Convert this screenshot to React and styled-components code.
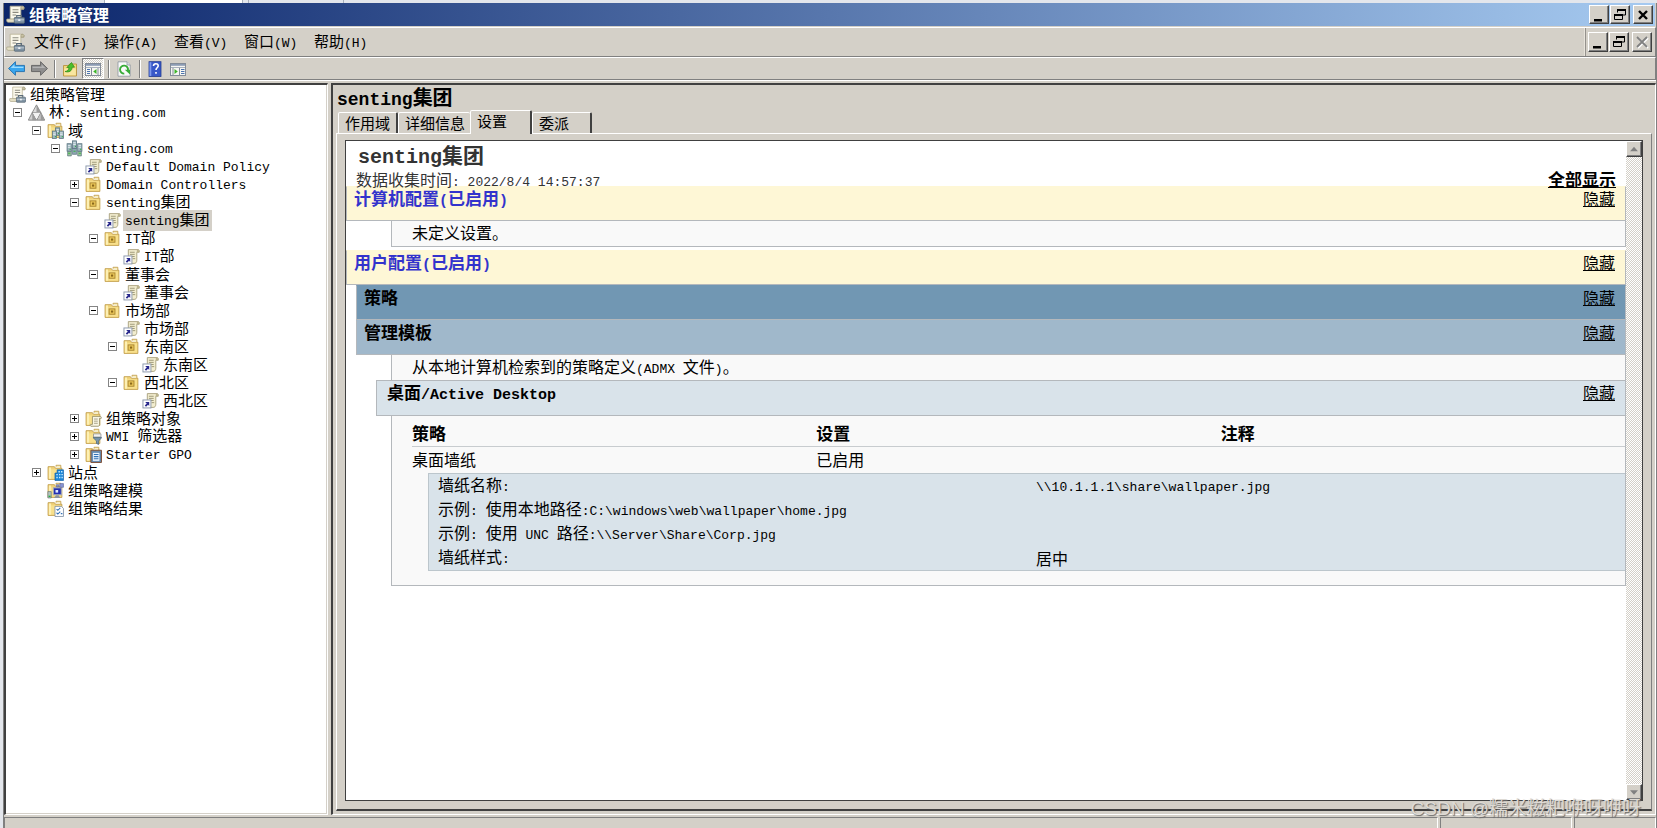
import React from "react";
import styled, { createGlobalStyle, css } from "styled-components";

const face = "#d4d0c8";
const shade = "#808080";
const dark = "#404040";
const line = "#b4b8bc";

const GlobalStyle = createGlobalStyle`
  * { box-sizing: border-box; }
  html, body, #root { height: 100%; }
  body {
    margin: 0;
    overflow: hidden;
    background: #e3e6ec;
    color: #000;
    font-family: "Noto Sans CJK SC", sans-serif;
    font-size: 15px;
    line-height: 18px;
  }
  button { font: inherit; color: inherit; padding: 0; margin: 0; }
`;

/* ---------- text ---------- */

const Latin = styled.span`
  font-family: "Liberation Mono", monospace;
  font-size: ${(p) => p.$size}px;
  white-space: pre;
`;

/* Latin runs are set in a half-width face beside the full-width Chinese. */
function Text({ children, latin = 13 }) {
  return children
    .split(/([\x20-\x7e]+)/)
    .filter(Boolean)
    .map((run, i) =>
      /^[\x20-\x7e]/.test(run) ? (
        <Latin key={i} $size={latin}>{run}</Latin>
      ) : (
        <React.Fragment key={i}>{run}</React.Fragment>
      )
    );
}

/* ---------- icons ---------- */

const Svg = styled.svg`
  display: block;
  flex: none;
  width: ${(p) => p.$size || 17}px;
  height: ${(p) => p.$size || 17}px;
`;

const Scroll = () => (
  <>
    <path d="M3.500 1h10c1.500 0 2 1 1.500 2.500h-2.500v8.500H3.500z" fill="#fbf8ea" stroke="#b8b296" strokeWidth=".7" />
    <path d="M12.500 3.500V2c0-1 2-1.500 2.700 0L15 3.500z" fill="#c9c3a6" stroke="#948d70" strokeWidth=".5" />
    <path d="M5.500 4h5M5.500 6.200h5M5.500 8.400h3" stroke="#8c8a80" strokeWidth="1" />
    <path d="M.8 11.800h9v2.800H1.800C.6 14.600.2 12.800.8 11.800z" fill="#e4dfc4" stroke="#a8a284" strokeWidth=".6" />
  </>
);

const Folder = () => (
  <>
    <path d="M1 2.500h6l1 1.500h6v10.500H1z" fill="#f0d27a" stroke="#c09c48" strokeWidth=".8" />
    <path d="M8.500 2.500V1.200h4.500V4" fill="#f8eec0" stroke="#c09c48" strokeWidth=".8" />
    <path d="M1.800 5h11.500v8.800H1.800z" fill="#f8e08c" />
    <path d="M1.800 3.300h2v10.500h-2z" fill="#fdf0b4" />
  </>
);

const Server = ({ x, y }) => (
  <>
    <rect x={x} y={y} width="4" height="7" fill="#9fb4bd" stroke="#54707c" strokeWidth=".7" />
    <path d={`M${x + 0.8} ${y + 1.8}h2.400M${x + 0.8} ${y + 3.4}h2.400`} stroke="#eaf4f6" strokeWidth=".8" />
    <path d={`M${x + 2.4} ${y + 5.3}h1`} stroke="#2fae4a" strokeWidth="1.200" />
  </>
);

const glyphs = {
  console: (
    <>
      <Scroll />
      <path d="M9 10.500V9h4v1.500" fill="none" stroke="#5c6c7a" strokeWidth="1" />
      <rect x="7" y="10.500" width="8.500" height="4.800" rx=".6" fill="#8094a4" stroke="#566674" strokeWidth=".7" />
      <path d="M7.300 12.500h8" stroke="#c4ced6" strokeWidth=".8" />
      <path d="M10.300 12h1.800v1.500h-1.800z" fill="#eef2f5" />
    </>
  ),
  forest: (
    <g stroke="#6f6f6f" strokeWidth=".7" strokeLinejoin="round">
      <path d="M8 .8l4 7.200H4z" fill="#dcdcdc" />
      <path d="M4 8l3.900 7.200H.3z" fill="#d0d0d0" />
      <path d="M12 8l3.700 7.200H8.100z" fill="#c4c4c4" />
      <path d="M8 .8V8h4zM4 8v7.200h3.900zM12 8v7.200h3.700z" fill="#9a9a9a" stroke="none" />
      <path d="M4.600 8.300h6.800L8 14.500z" fill="#f2f2f2" stroke="none" />
    </g>
  ),
  domains: (
    <>
      <Folder />
      <Server x={8} y={5.5} />
      <Server x={5} y={8.5} />
      <Server x={11.5} y={8.5} />
    </>
  ),
  domain: (
    <>
      <path d="M1.500 10.500h3.500v4.500H1.500zM11 10.500h3.500v4.500h-3.500z" fill="#9cc09a" stroke="#54707c" strokeWidth=".6" />
      <Server x={1} y={3.5} />
      <Server x={11} y={3.5} />
      <path d="M6 7.500h4v6H6z" fill="#8da5b0" stroke="#54707c" strokeWidth=".6" />
      <Server x={6} y={0.8} />
      <path d="M2 12.500h2M12 12.500h2M7 10.500h2" stroke="#39b54a" strokeWidth="1" />
    </>
  ),
  link: (
    <>
      <path d="M5 1.500h9.500c1 .5 1 1.500.8 2.500h-2.300v7.500c0 2-1 3-2.500 3H5z" fill="#f2edcf" stroke="#a39b76" strokeWidth=".8" />
      <path d="M13 4V2.500c0-1 1.500-1 2.200 0V4z" fill="#bdb48c" />
      <path d="M6.500 4h4.500M6.500 6h4.500M8.500 8h2.500M9 10h2.500" stroke="#9c9778" strokeWidth=".9" />
      <rect x=".9" y="7.500" width="7.500" height="7.500" fill="#fff" stroke="#8c98ac" strokeWidth=".9" />
      <path d="M3 9.300h3.800v3.800L5.700 12l-1.900 1.900-1.200-1.200 1.900-1.900z" fill="#28288c" />
    </>
  ),
  ou: (
    <>
      <Folder />
      <rect x="4.800" y="6.500" width="5.500" height="5" fill="#f0cc5c" stroke="#a88430" strokeWidth=".9" />
      <path d="M6.500 8h2.200v2H6.500z" fill="#8a681c" />
    </>
  ),
  objects: (
    <>
      <Folder />
      <path d="M7 6h7.500c1 .3.900 1.200.8 1.800h-1.600v6c0 .8-.6 1.500-1.500 1.500H5.500c-.8-.6-.6-1.500-.3-1.800H7z" fill="#f8f5e4" stroke="#948c68" strokeWidth=".8" />
      <path d="M8.500 8.500H12M8.500 10.500H12M8.500 12.500H12" stroke="#9c967c" strokeWidth=".8" />
    </>
  ),
  wmi: (
    <>
      <Folder />
      <path d="M8 5.500h7v3H8z" fill="#f2f2f2" stroke="#8c8c8c" strokeWidth=".7" />
      <path d="M7.500 9h8.300l-3 3.200V15.500l-2-1v-2.300z" fill="#7895ad" stroke="#4a657c" strokeWidth=".7" />
    </>
  ),
  starter: (
    <>
      <Folder />
      <path d="M5.500 4h10v11.500h-10z" fill="#6e8ca8" stroke="#7d4e36" strokeWidth=".9" />
      <path d="M7 6h7v8.500H7z" fill="#e9f2fb" stroke="#3d6ea5" strokeWidth=".6" />
      <path d="M8.300 8h4.400M8.300 10h4.400M8.300 12h4.400" stroke="#3272b8" strokeWidth="1" />
    </>
  ),
  sites: (
    <>
      <Folder />
      <path d="M9.500 5.500h6v10h-8V8.500h2z" fill="#1c86d8" stroke="#0c5ca4" strokeWidth=".6" />
      <path d="M10.800 7.200h1.300M13.200 7.200h1.300M8.800 10h1.300M11.300 10h1.300M13.600 10h1.300M8.800 12.600h1.300M11.300 12.600h1.300M13.600 12.600h1.300" stroke="#c8ecff" strokeWidth="1.400" />
    </>
  ),
  modeling: (
    <>
      <Folder />
      <rect x="6" y="5.500" width="7.500" height="6.500" fill="#2430b4" stroke="#a0a8bc" />
      <path d="M8 7.500h2.500V10H8z" fill="#dfe8ff" />
      <path d="M8.500 12.500h2.500l1.500 2.500H6.500z" fill="#8c94a0" />
      <path d="M9 2.500h2v2H9zM12 1.500h3.500V5H12z" fill="#8a96d4" stroke="#50588c" strokeWidth=".5" />
      <path d="M.8 9h3.200v6H.8z" fill="#b4c4c0" stroke="#60706c" strokeWidth=".6" />
      <path d="M1.500 13.500h1.800" stroke="#20b040" strokeWidth="1.300" />
    </>
  ),
  results: (
    <>
      <Folder />
      <path d="M7.500 6h6l2 2v7.500h-8z" fill="#fff" stroke="#8494a8" strokeWidth=".8" />
      <path d="M9 8.500l1.200 1.200L12.500 7.500M9 12l1.200 1.200 2.300-2.200M13 12.800h1.500" fill="none" stroke="#3272b8" strokeWidth="1" />
    </>
  ),
  back: (
    <>
      <path d="M.5 8L7 1.600v3.500h8.500v5.800H7v3.500z" fill="#3aa6ee" stroke="#1c6cac" strokeWidth=".8" strokeLinejoin="round" />
      <path d="M2.500 7.500L6 4.200v2.200h8.500v1.100z" fill="#9cdcff" />
    </>
  ),
  forward: (
    <>
      <path d="M15.500 8L9 1.600v3.500H.5v5.800H9v3.500z" fill="#8e8e8e" stroke="#5c5c5c" strokeWidth=".8" strokeLinejoin="round" />
      <path d="M13.500 7.500L10 4.200v2.200H1.500v1.100z" fill="#b4b4b4" />
    </>
  ),
  up: (
    <>
      <path d="M1.500 4.500h5l1-1.500h7v12h-13z" fill="#f3d67c" stroke="#b48c34" strokeWidth=".8" />
      <path d="M2.300 7.500h11.500v6.700H2.300z" fill="#f9e6a0" />
      <path d="M3 10.500c2.500-.3 3.700-1.500 4-4H4.800L9.500 1.500l3 4.700h-2.300c-.2 4-3.200 5.500-7.200 4.300z" fill="#4cbf2c" stroke="#2a8a18" strokeWidth=".7" />
    </>
  ),
  tree: (
    <>
      <rect x=".5" y="2.500" width="15" height="12" fill="#f6f6f2" stroke="#848c98" />
      <path d="M1 3h14v1.800H1z" fill="#8c9cb4" />
      <path d="M1 6.500h14" stroke="#a8b0bc" />
      <path d="M6.500 7v7M13 7v7" stroke="#848c98" />
      <path d="M2 8.500h3M2 10.500h3M2 12.500h3" stroke="#4c74b0" />
      <path d="M11.500 8v5L8.200 10.500z" fill="#3cb428" />
    </>
  ),
  actions: (
    <>
      <rect x=".5" y="2.500" width="15" height="12" fill="#f6f6f2" stroke="#848c98" />
      <path d="M1 3h14v1.800H1z" fill="#8c9cb4" />
      <path d="M1 6.500h14" stroke="#a8b0bc" />
      <path d="M3 7v7M9.500 7v7" stroke="#848c98" />
      <path d="M11 8.500h3.500M11 10.500h3.500M11 12.500h3.500" stroke="#4c74b0" />
      <path d="M4.500 8v5l3.300-2.500z" fill="#3cb428" />
    </>
  ),
  refresh: (
    <>
      <path d="M2 .8h9l3.200 3.200v11.200H2z" fill="#fafafa" stroke="#8c949c" strokeWidth=".8" />
      <path d="M11 .8V4h3.200" fill="#dde4ea" stroke="#8c949c" strokeWidth=".8" />
      <path d="M8.300 12.600A4 4 0 1 1 12 9.300" fill="none" stroke="#38ac38" strokeWidth="1.900" />
      <path d="M8.800 8.800h5.200v4.700z" fill="#38ac38" />
    </>
  ),
  help: (
    <>
      <rect x="2" y=".7" width="12" height="14.800" fill="#3858c8" stroke="#243c90" strokeWidth=".8" />
      <path d="M2.500 1.200h1.800v13.800H2.500z" fill="#7c98ec" />
      <path d="M6.500 5c0-3 4.700-3 4.700-.2 0 2-2.200 2-2.200 4.200M9 11v1.800" fill="none" stroke="#fff" strokeWidth="1.600" />
    </>
  ),
  minimize: <path d="M3 12h8v2.500H3z" fill="#000" />,
  restore: (
    <>
      <path d="M5.500 5.500V2.500h8V8H11M2.500 7.500h8v5h-8z" fill="none" stroke="#000" />
      <path d="M5 3h9M2 8h9" stroke="#000" strokeWidth="2" />
    </>
  ),
  close: <path d="M4 4l8 8M12 4l-8 8" stroke="#000" strokeWidth="2.400" />,
  closeOff: (
    <>
      <path d="M4 4l10 10M14 4l-10 10" stroke="#fff" strokeWidth="1.800" />
      <path d="M3 3l10 10M13 3l-10 10" stroke="#808080" strokeWidth="1.800" />
    </>
  ),
  arrowUp: <path d="M3.500 10.500h9L8 5.500z" fill="#808080" />,
  arrowDown: <path d="M3.500 6h9L8 11z" fill="#808080" />,
};

const Icon = ({ name, size }) => (
  <Svg viewBox="0 0 16 16" $size={size} aria-hidden="true">
    {glyphs[name]}
  </Svg>
);

/* ---------- frame ---------- */

const Screen = styled.div`
  position: relative;
  height: 100vh;
  display: flex;
  flex-direction: column;
  overflow: hidden;
`;

const BackStrip = styled.div`
  flex: none;
  height: 3px;
  padding-left: 104px;
  display: flex;
  gap: 5px;
`;

const BackTab = styled.span`
  width: ${(p) => p.$width}px;
  background: ${(p) => (p.$active ? "#fff" : "transparent")};
  border: solid #a8b0bc;
  border-width: 0 1px;
`;

const Window = styled.main`
  flex: 1;
  min-height: 0;
  margin-left: 3px;
  display: flex;
  flex-direction: column;
  background: ${face};
  border: solid ${shade};
  border-width: 0 1px;
`;

const TitleBar = styled.header`
  flex: none;
  height: 23px;
  margin-right: 1px;
  padding: 0 2px 0 2px;
  display: flex;
  align-items: center;
  gap: 4px;
  background: linear-gradient(to right, #0a246a, #a6caf0);
`;

const WindowTitle = styled.h1`
  margin: 0;
  padding-bottom: 2px;
  flex: 1;
  color: #fff;
  font-size: 16px;
  line-height: 20px;
`;

const raised = css`
  background: ${face};
  border: 1px solid;
  border-color: #fff ${dark} ${dark} #fff;
  box-shadow: inset -1px -1px 0 ${shade};
`;

const ButtonGroup = styled.div`
  display: flex;
  gap: 1px;
`;

const FrameButton = styled.button`
  ${raised}
  width: 20px;
  height: ${(p) => p.$height || 19}px;
  margin-left: ${(p) => (p.$apart ? 2 : 0)}px;
  display: flex;
  align-items: center;
  justify-content: center;
`;

const MenuBar = styled.nav`
  flex: none;
  height: 30px;
  margin-top: 1px;
  display: flex;
  align-items: stretch;
  border: solid;
  border-width: 1px 1px 1px;
  border-color: #fff ${shade} ${shade} #fff;
`;

const MenuItems = styled.div`
  flex: 1;
  padding-left: 1px;
  display: flex;
  align-items: center;
`;

const MenuItem = styled.button`
  width: 70px;
  height: 22px;
  padding: 0 0 0 9px;
  text-align: left;
  background: none;
  border: 0;
  white-space: nowrap;
`;

const ChildControls = styled(ButtonGroup)`
  align-items: center;
  padding: 0 3px 0 2px;
  border-left: 2px ridge #e8e4dc;
`;

const ToolBar = styled.div`
  flex: none;
  height: 23px;
  padding-left: 1px;
  display: flex;
  align-items: center;
  gap: 1px;
  border: solid;
  border-width: 1px 1px 1px 0;
  border-color: #fff ${shade} ${shade};
`;

const ToolButton = styled.button`
  width: 22px;
  height: 21px;
  display: flex;
  align-items: center;
  justify-content: center;
  border: 1px solid transparent;
  background: none;
  ${(p) =>
    p.$pressed &&
    css`
      border-color: ${shade} #fff #fff ${shade};
      background: repeating-conic-gradient(#fff 0 25%, ${face} 0 50%) 0 0 / 2px 2px;
    `}
`;

const Divider = styled.span`
  width: 2px;
  height: 18px;
  margin: 0 2px 0 3px;
  border-left: 1px solid ${shade};
  border-right: 1px solid #fff;
`;

const Panes = styled.div`
  flex: 1;
  min-height: 0;
  display: flex;
  gap: 3px;
  padding-top: 2px;
  border-top: 1px solid #fff;
`;

const sunken = css`
  border: solid;
  border-width: 2px 1px 1px 2px;
  border-color: ${dark} #fff #fff ${dark};
`;

const TreePane = styled.aside`
  ${sunken}
  flex: 0 0 324px;
  background: #fff;
  box-shadow: inset -1px -1px 0 ${face};
  overflow: hidden;
`;

/* ---------- tree ---------- */

const TreeList = styled.ul`
  margin: 0;
  padding: 0;
  list-style: none;
`;

const TreeRow = styled.li`
  height: 18px;
  padding-left: ${(p) => 3 + 19 * Math.max(0, p.$level - 1)}px;
  display: flex;
  align-items: center;
  gap: 2px;
  white-space: nowrap;
`;

const Slot = styled.span`
  width: 17px;
  flex: none;
  display: flex;
  justify-content: center;
`;

const Expander = styled.button`
  position: relative;
  width: 9px;
  height: 9px;
  border: 1px solid #848484;
  background: #fff;
  &::before {
    content: "";
    position: absolute;
    inset: 3px 1px;
    background: #000;
  }
  &::after {
    content: "";
    position: absolute;
    inset: 1px 3px;
    background: ${(p) => (p.$open ? "transparent" : "#000")};
  }
`;

const Label = styled.span`
  padding: 0 2px;
  line-height: 18px;
  background: ${(p) => (p.$selected ? face : "transparent")};
`;

const tree = [
  [0, "console", "组策略管理"],
  [1, "forest", "林: senting.com", "-"],
  [2, "domains", "域", "-"],
  [3, "domain", "senting.com", "-"],
  [4, "link", "Default Domain Policy"],
  [4, "ou", "Domain Controllers", "+"],
  [4, "ou", "senting集团", "-"],
  [5, "link", "senting集团", "", true],
  [5, "ou", "IT部", "-"],
  [6, "link", "IT部"],
  [5, "ou", "董事会", "-"],
  [6, "link", "董事会"],
  [5, "ou", "市场部", "-"],
  [6, "link", "市场部"],
  [6, "ou", "东南区", "-"],
  [7, "link", "东南区"],
  [6, "ou", "西北区", "-"],
  [7, "link", "西北区"],
  [4, "objects", "组策略对象", "+"],
  [4, "wmi", "WMI 筛选器", "+"],
  [4, "starter", "Starter GPO", "+"],
  [2, "sites", "站点", "+"],
  [2, "modeling", "组策略建模"],
  [2, "results", "组策略结果"],
];

/* ---------- detail pane ---------- */

const DetailPane = styled.section`
  ${sunken}
  flex: 1;
  min-width: 0;
  display: flex;
  flex-direction: column;
  padding: 0 3px 3px 3px;
`;

const DetailTitle = styled.h2`
  margin: 0;
  padding-left: 1px;
  height: 25px;
  font-size: 20px;
  line-height: 24px;
`;

const Tabs = styled.div`
  display: flex;
  align-items: flex-end;
  height: 23px;
  padding-left: 2px;
`;

const Tab = styled.button`
  position: relative;
  min-width: 60px;
  height: 21px;
  padding: 0 5px 0 6px;
  text-align: left;
  white-space: nowrap;
  background: ${face};
  border: solid;
  border-width: 1px 2px 0 1px;
  border-color: #fff ${dark} transparent #fff;
  border-radius: 2px 2px 0 0;
  ${(p) =>
    p.$beforeSelected &&
    css`
      border-right-width: 0;
    `}
  ${(p) =>
    p.$selected &&
    css`
      min-width: 62px;
      height: 24px;
      margin-bottom: -1px;
      padding: 0 6px 4px;
      z-index: 1;
    `}
`;

const TabPage = styled.div`
  flex: 1;
  min-height: 0;
  padding: 6px 8px 8px;
  display: flex;
  border: solid;
  border-width: 1px 1px 2px 1px;
  border-color: #fff ${shade} ${dark} #fff;
`;

const ReportFrame = styled.div`
  flex: 1;
  min-width: 0;
  display: flex;
  border: 1px solid ${dark};
  background: #fff;
`;

const Report = styled.article`
  flex: 1;
  min-width: 0;
  overflow: hidden;
  font-size: 16px;
  line-height: 20px;
`;

const ScrollBar = styled.div`
  flex: 0 0 16px;
  display: flex;
  flex-direction: column;
  justify-content: space-between;
  background: repeating-conic-gradient(#fff 0 25%, ${face} 0 50%) 0 0 / 2px 2px;
`;

const ScrollButton = styled.button`
  ${raised}
  width: 16px;
  height: 16px;
  display: flex;
  align-items: center;
  justify-content: center;
`;

const ReportHead = styled.div`
  height: 45px;
  padding: 0 10px;
  color: #333;
`;

const ReportTitle = styled.h3`
  margin: 0;
  padding-left: 2px;
  font-size: 21px;
  line-height: 26px;
`;

const ReportMeta = styled.div`
  display: flex;
  justify-content: space-between;
  line-height: 16px;
`;

const Link = styled.a`
  color: #000;
  font-size: ${(p) => (p.$strong ? 17 : 16)}px;
  font-weight: ${(p) => (p.$strong ? 700 : 400)};
`;

const barTones = {
  root: { back: "#fef7d6", color: "#3333cc", indent: 0, inset: 7, height: 35 },
  policy: { back: "#7197b3", color: "#000", indent: 10, inset: 7, height: 35 },
  template: { back: "#a0b8cb", color: "#000", indent: 10, inset: 7, height: 35 },
  item: { back: "#d9e3ea", color: "#000", indent: 30, inset: 10, height: 36 },
};

const Bar = styled.header`
  height: ${(p) => barTones[p.$tone].height}px;
  margin-left: ${(p) => barTones[p.$tone].indent}px;
  padding: 1px 10px 0 ${(p) => barTones[p.$tone].inset}px;
  display: flex;
  justify-content: space-between;
  align-items: flex-start;
  background: ${(p) => barTones[p.$tone].back};
  color: ${(p) => barTones[p.$tone].color};
  border: 1px solid ${line};
  border-top-color: ${(p) => (p.$tone === "item" ? line : "transparent")};
`;

const BarTitle = styled.h4`
  margin: 0;
  font-size: 17px;
  line-height: 20px;
`;

const Box = styled.div`
  margin-left: 45px;
  background: #f9f9f9;
  border: solid ${line};
  border-width: 0 1px;
`;

const Note = styled(Box)`
  height: ${(p) => (p.$closed ? 26 : 25)}px;
  padding: 1px 0 0 20px;
  border-bottom-width: ${(p) => (p.$closed ? 1 : 0)}px;
  margin-bottom: ${(p) => (p.$closed ? 3 : 0)}px;
`;

const TableBox = styled(Box)`
  padding: 5px 0 14px 20px;
  border-bottom-width: 1px;
`;

const SettingsTable = styled.table`
  width: 100%;
  table-layout: fixed;
  border-collapse: separate;
  border-spacing: 0;
  th, td {
    height: 26px;
    padding: 0 0 2px;
    text-align: left;
  }
  th {
    font-size: 17px;
    border-bottom: 1px solid #c8cccf;
  }
`;

const ValueCell = styled.td`
  && { padding: 0 0 0 16px; }
`;

const ValueTable = styled.table`
  width: 100%;
  table-layout: fixed;
  border-spacing: 0;
  background: #d9e3ea;
  border: 1px solid #bcc6cc;
  border-right: 0;
  && td {
    height: 24px;
    padding: 0 0 0 9px;
  }
`;

const StatusBar = styled.footer`
  flex: none;
  height: 13px;
  padding-top: 2px;
  display: flex;
  gap: 2px;
`;

const StatusCell = styled.div`
  flex: ${(p) => (p.$width ? `0 0 ${p.$width}px` : 1)};
  border: solid;
  border-width: 1px 1px 0;
  border-color: ${shade} #fff ${shade} ${shade};
`;

const Watermark = styled.div`
  position: absolute;
  right: 16px;
  bottom: 7px;
  font-size: 19px;
  line-height: 24px;
  color: #dedad4;
  text-shadow: 1px 1px 1px #6c6c6c;
  font-family: "Liberation Sans", "Noto Sans CJK SC", sans-serif;
  white-space: nowrap;
  pointer-events: none;
`;

const Section = ({ tone, title, children }) => (
  <section>
    <Bar $tone={tone}>
      <BarTitle><Text latin={15}>{title}</Text></BarTitle>
      <Link href="#hide">隐藏</Link>
    </Bar>
    {children}
  </section>
);

const menus = ["文件(F)", "操作(A)", "查看(V)", "窗口(W)", "帮助(H)"];
const tabs = ["作用域", "详细信息", "设置", "委派"];
const activeTab = 2;

export default function App() {
  return (
    <Screen>
      <GlobalStyle />
      <BackStrip>
        <BackTab $width={139} $active />
        <BackTab $width={96} />
      </BackStrip>
      <Window>
        <TitleBar>
          <Icon name="console" size={19} />
          <WindowTitle>组策略管理</WindowTitle>
          <ButtonGroup>
            <FrameButton aria-label="最小化"><Icon name="minimize" size={16} /></FrameButton>
            <FrameButton aria-label="还原"><Icon name="restore" size={16} /></FrameButton>
            <FrameButton $apart aria-label="关闭"><Icon name="close" size={16} /></FrameButton>
          </ButtonGroup>
        </TitleBar>

        <MenuBar aria-label="菜单">
          <MenuItems>
            <Icon name="console" size={19} />
            {menus.map((m) => (
              <MenuItem key={m}><Text>{m}</Text></MenuItem>
            ))}
          </MenuItems>
          <ChildControls>
            <FrameButton $height={20} aria-label="最小化子窗口"><Icon name="minimize" size={16} /></FrameButton>
            <FrameButton $height={20} aria-label="还原子窗口"><Icon name="restore" size={16} /></FrameButton>
            <FrameButton $height={20} $apart disabled aria-label="关闭子窗口"><Icon name="closeOff" size={16} /></FrameButton>
          </ChildControls>
        </MenuBar>

        <ToolBar role="toolbar" aria-label="工具栏">
          <ToolButton aria-label="后退"><Icon name="back" /></ToolButton>
          <ToolButton aria-label="前进"><Icon name="forward" /></ToolButton>
          <Divider />
          <ToolButton aria-label="上移一级"><Icon name="up" size={16} /></ToolButton>
          <ToolButton $pressed aria-label="显示控制台树"><Icon name="tree" size={16} /></ToolButton>
          <Divider />
          <ToolButton aria-label="刷新"><Icon name="refresh" size={16} /></ToolButton>
          <Divider />
          <ToolButton aria-label="帮助"><Icon name="help" size={16} /></ToolButton>
          <ToolButton aria-label="显示操作窗格"><Icon name="actions" size={16} /></ToolButton>
        </ToolBar>

        <Panes>
          <TreePane>
            <TreeList role="tree">
              {tree.map(([level, icon, label, mark, selected], i) => (
                <TreeRow key={i} role="treeitem" aria-level={level + 1} aria-selected={!!selected} $level={level}>
                  {level > 0 && (
                    <Slot>
                      {mark && (
                        <Expander $open={mark === "-"} aria-label={mark === "-" ? "折叠" : "展开"} />
                      )}
                    </Slot>
                  )}
                  <Icon name={icon} />
                  <Label $selected={selected}><Text>{label}</Text></Label>
                </TreeRow>
              ))}
            </TreeList>
          </TreePane>

          <DetailPane>
            <DetailTitle><Text latin={18}>senting集团</Text></DetailTitle>
            <Tabs role="tablist">
              {tabs.map((t, i) => (
                <Tab
                  key={t}
                  role="tab"
                  aria-selected={i === activeTab}
                  $selected={i === activeTab}
                  $beforeSelected={i === activeTab - 1}
                >
                  {t}
                </Tab>
              ))}
            </Tabs>
            <TabPage role="tabpanel">
              <ReportFrame>
                <Report>
                  <ReportHead>
                    <ReportTitle><Text latin={20}>senting集团</Text></ReportTitle>
                    <ReportMeta>
                      <span><Text>数据收集时间: 2022/8/4 14:57:37</Text></span>
                      <Link href="#all" $strong>全部显示</Link>
                    </ReportMeta>
                  </ReportHead>

                  <Section tone="root" title="计算机配置(已启用)">
                    <Note $closed>未定义设置。</Note>
                  </Section>

                  <Section tone="root" title="用户配置(已启用)">
                    <Section tone="policy" title="策略">
                      <Section tone="template" title="管理模板">
                        <Note><Text>从本地计算机检索到的策略定义(ADMX 文件)。</Text></Note>
                        <Section tone="item" title="桌面/Active Desktop">
                          <TableBox>
                            <SettingsTable>
                              <thead>
                                <tr>
                                  <th scope="col">策略</th>
                                  <th scope="col">设置</th>
                                  <th scope="col">注释</th>
                                </tr>
                              </thead>
                              <tbody>
                                <tr>
                                  <td>桌面墙纸</td>
                                  <td>已启用</td>
                                  <td />
                                </tr>
                                <tr>
                                  <ValueCell colSpan={3}>
                                    <ValueTable>
                                      <tbody>
                                        <tr>
                                          <td><Text>墙纸名称:</Text></td>
                                          <td><Text>{"\\\\10.1.1.1\\share\\wallpaper.jpg"}</Text></td>
                                        </tr>
                                        <tr>
                                          <td colSpan={2}><Text>{"示例: 使用本地路径:C:\\windows\\web\\wallpaper\\home.jpg"}</Text></td>
                                        </tr>
                                        <tr>
                                          <td colSpan={2}><Text>{"示例: 使用 UNC 路径:\\\\Server\\Share\\Corp.jpg"}</Text></td>
                                        </tr>
                                        <tr>
                                          <td><Text>墙纸样式:</Text></td>
                                          <td>居中</td>
                                        </tr>
                                      </tbody>
                                    </ValueTable>
                                  </ValueCell>
                                </tr>
                              </tbody>
                            </SettingsTable>
                          </TableBox>
                        </Section>
                      </Section>
                    </Section>
                  </Section>
                </Report>
                <ScrollBar>
                  <ScrollButton aria-label="向上滚动"><Icon name="arrowUp" size={14} /></ScrollButton>
                  <ScrollButton aria-label="向下滚动"><Icon name="arrowDown" size={14} /></ScrollButton>
                </ScrollBar>
              </ReportFrame>
            </TabPage>
          </DetailPane>
        </Panes>

        <StatusBar>
          <StatusCell />
          <StatusCell $width={132} />
          <StatusCell $width={82} />
        </StatusBar>
      </Window>
      <Watermark>CSDN @糯米糍粑咿呀咿呀</Watermark>
    </Screen>
  );
}
